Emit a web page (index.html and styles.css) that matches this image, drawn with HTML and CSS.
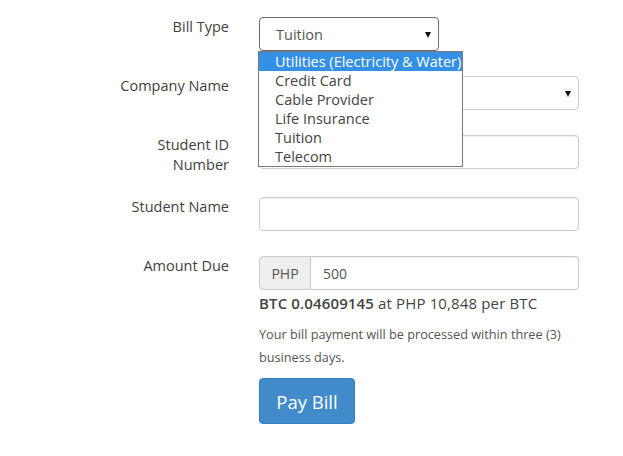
FILE: index.html
```html
<!DOCTYPE html>
<html>
<head>
<meta charset="utf-8">
<link rel="stylesheet" href="styles.css">
</head>
<body>
<form class="form">
  <div class="row">
    <label class="label">Bill Type</label>
    <div class="control">
      <div class="select-wrap">
        <div class="select select-focus select-short">
          <span>Tuition</span><span class="arrow"></span>
        </div>
        <ul class="dropdown">
          <li class="opt opt-active">Utilities (Electricity &amp; Water)</li>
          <li class="opt">Credit Card</li>
          <li class="opt">Cable Provider</li>
          <li class="opt">Life Insurance</li>
          <li class="opt">Tuition</li>
          <li class="opt">Telecom</li>
        </ul>
      </div>
    </div>
  </div>
  <div class="row">
    <label class="label">Company Name</label>
    <div class="control">
      <div class="select"><span></span><span class="arrow"></span></div>
    </div>
  </div>
  <div class="row row-tall">
    <label class="label">Student ID<br>Number</label>
    <div class="control">
      <div class="input"></div>
    </div>
  </div>
  <div class="row">
    <label class="label">Student Name</label>
    <div class="control">
      <div class="input"></div>
    </div>
  </div>
  <div class="row">
    <label class="label">Amount Due</label>
    <div class="control">
      <div class="input-group">
        <span class="addon">PHP</span>
        <span class="group-input">500</span>
      </div>
      <p class="btc"><strong>BTC 0.04609145</strong> at PHP 10,848 per BTC</p>
      <p class="note">Your bill payment will be processed within three (3) business days.</p>
      <button type="button" class="btn">Pay Bill</button>
    </div>
  </div>
</form>
</body>
</html>
```
FILE: styles.css
```css
* { box-sizing: border-box; }
body {
  margin: 0;
  background: #fff;
  font-family: "Open Sans", "DejaVu Sans", sans-serif;
  color: #555;
}
.form {
  padding-top: 17px;
}
.row {
  display: flex;
  align-items: flex-start;
  margin-bottom: 25px;
}
.row-tall {
  margin-bottom: 22px;
}
.label {
  width: 229px;
  text-align: right;
  font-size: 14.5px;
  font-weight: 400;
  line-height: 20px;
  color: #3f3f3f;
}
.control {
  margin-left: 30px;
  width: 320px;
}
.select-wrap {
  position: relative;
}
.select {
  height: 34px;
  border: 1px solid #ccc;
  border-radius: 4px;
  display: flex;
  align-items: center;
  justify-content: space-between;
  padding: 0 7px 0 16px;
  font-size: 14.5px;
  color: #555;
  background: #fff;
}
.select-short {
  width: 180px;
}
.select-focus {
  border-color: #6b6b6b;
}
.arrow {
  width: 0;
  height: 0;
  border-left: 3.5px solid transparent;
  border-right: 3.5px solid transparent;
  border-top: 6px solid #111;
  margin-top: 1px;
}
.dropdown {
  position: absolute;
  left: -1px;
  top: 34px;
  width: 205px;
  margin: 0;
  padding: 0;
  list-style: none;
  background: #fff;
  border: 1px solid #7a7a7a;
  z-index: 2;
}
.opt {
  height: 19px;
  line-height: 19px;
  padding-left: 16px;
  font-size: 14.5px;
  color: #444;
  white-space: nowrap;
}
.opt-active {
  background: #3390e6;
  color: #fff;
}
.input {
  height: 34px;
  border: 1px solid #ccc;
  border-radius: 4px;
  box-shadow: inset 0 1px 1px rgba(0,0,0,0.075);
}
.input-group {
  display: flex;
  height: 34px;
}
.addon {
  width: 52px;
  background: #eee;
  border: 1px solid #ccc;
  border-radius: 4px 0 0 4px;
  display: flex;
  align-items: center;
  justify-content: center;
  font-size: 14px;
  color: #555;
}
.group-input {
  flex: 1;
  border: 1px solid #ccc;
  border-left: 0;
  border-radius: 0 4px 4px 0;
  display: flex;
  align-items: center;
  padding-left: 12px;
  font-size: 14px;
  color: #555;
  box-shadow: inset 0 1px 1px rgba(0,0,0,0.075);
}
.btc {
  margin: 2px 0 0;
  font-size: 15px;
  letter-spacing: 0.14px;
  line-height: 22px;
  color: #444;
}
.btc strong { font-weight: 600; }
.note {
  margin: 9px 0 0;
  font-size: 12.7px;
  line-height: 23px;
  color: #555;
  width: 310px;
}
.btn {
  margin-top: 9px;
  width: 96px;
  height: 46px;
  border: 1px solid #357ebd;
  border-radius: 4px;
  background: #428bca;
  color: #fff;
  font-family: "Open Sans", sans-serif;
  font-size: 18.5px;
  padding: 0;
}
```
